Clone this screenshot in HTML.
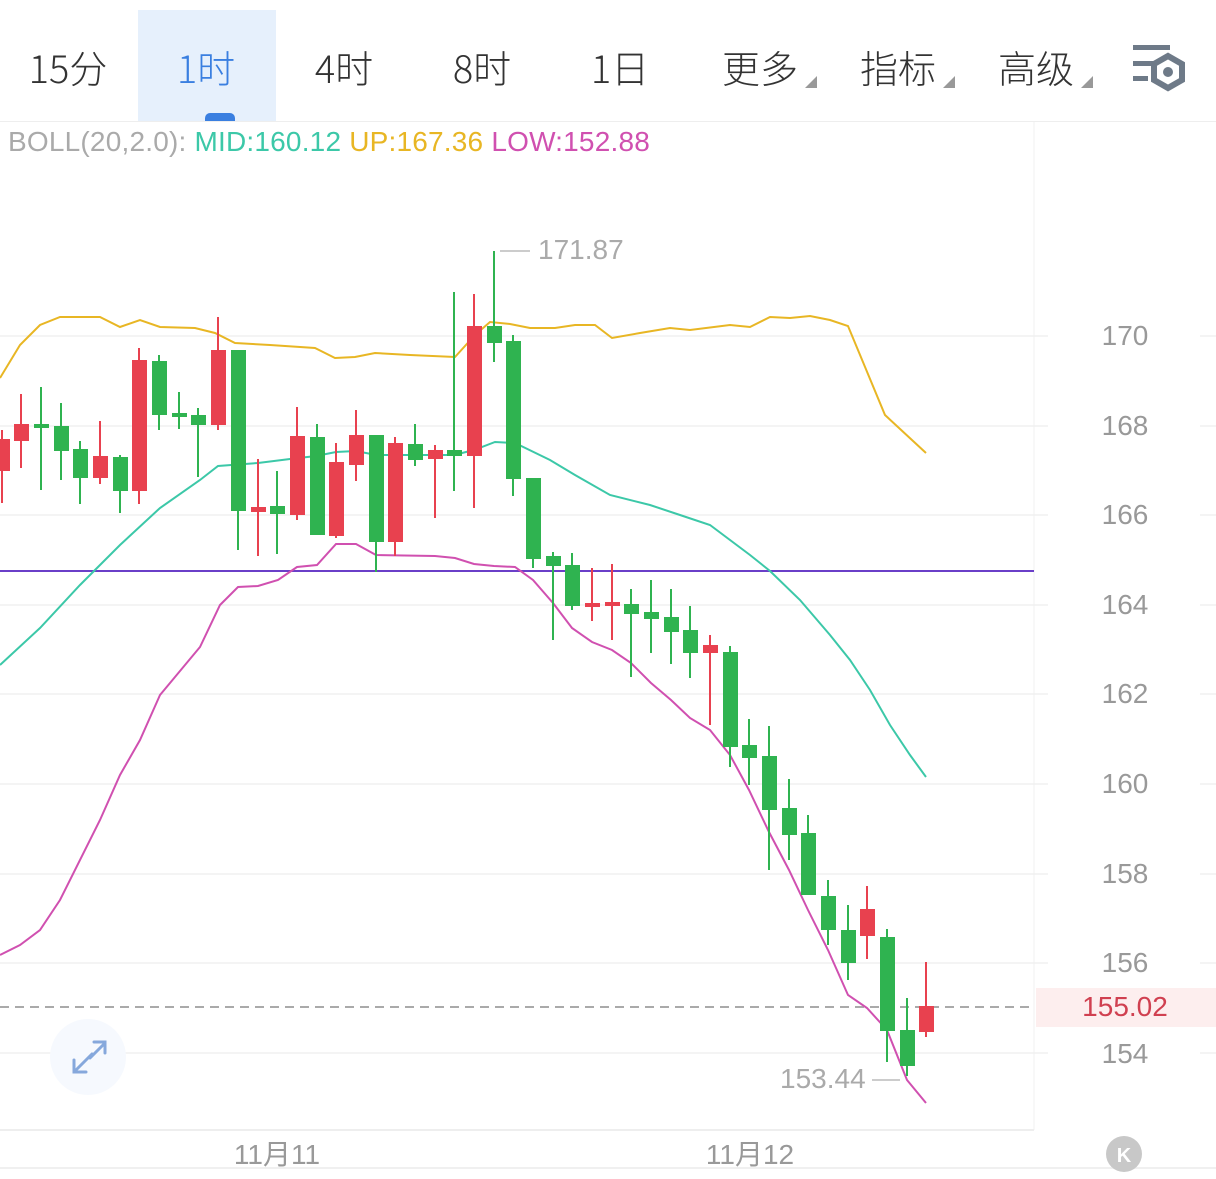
<!DOCTYPE html>
<html><head><meta charset="utf-8"><style>
html,body{margin:0;padding:0;background:#fff;width:1216px;height:1179px;overflow:hidden}
body{font-family:"Liberation Sans","Noto Sans CJK SC",sans-serif;position:relative}
.tab{position:absolute;top:40px;font-size:38px;color:#333;transform:translateX(-50%);white-space:nowrap;font-family:"Noto Sans CJK SC","Liberation Sans",sans-serif;font-weight:300;line-height:54px}
.tri{position:absolute;width:0;height:0;border-left:12px solid transparent;border-bottom:12px solid #999}
</style></head><body>
<div style="position:absolute;left:138px;top:10px;width:138px;height:111px;background:#e6f0fc"></div>
<div style="position:absolute;left:205px;top:113px;width:30px;height:9px;border-radius:5px 5px 0 0;background:#3a7fe0"></div>
<div style="position:absolute;left:0;top:121px;width:1216px;height:1px;background:#eee"></div>
<div class="tab" style="left:68px">15分</div>
<div class="tab" style="left:206px;color:#3a7fe0">1时</div>
<div class="tab" style="left:344px">4时</div>
<div class="tab" style="left:482px">8时</div>
<div class="tab" style="left:620px">1日</div>
<div class="tab" style="left:760px">更多</div>
<div class="tab" style="left:898px">指标</div>
<div class="tab" style="left:1036px">高级</div>
<div class="tri" style="left:805px;top:76px"></div>
<div class="tri" style="left:943px;top:76px"></div>
<div class="tri" style="left:1081px;top:76px"></div>
<svg style="position:absolute;left:0;top:0" width="1216" height="1179">
<g fill="#6e7a88"><rect x="1133" y="45" width="37" height="5"/><rect x="1133" y="61" width="20" height="5"/><rect x="1133" y="76" width="15" height="5"/></g>
<polygon points="1168,56 1182,64 1182,80 1168,88 1154,80 1154,64" fill="none" stroke="#6e7a88" stroke-width="6"/>
<circle cx="1168" cy="72" r="5" fill="#6e7a88"/>
<line x1="1034" y1="122" x2="1034" y2="1130" stroke="#f0f0f0"/>
<g stroke="#f0f0f0" stroke-width="1.5">
<line x1="0" x2="1048" y1="336" y2="336"/><line x1="0" x2="1048" y1="426" y2="426"/><line x1="0" x2="1048" y1="515" y2="515"/><line x1="0" x2="1048" y1="605" y2="605"/><line x1="0" x2="1048" y1="694" y2="694"/><line x1="0" x2="1048" y1="784" y2="784"/><line x1="0" x2="1048" y1="874" y2="874"/><line x1="0" x2="1048" y1="963" y2="963"/><line x1="0" x2="1048" y1="1053" y2="1053"/>
<line x1="1200" x2="1216" y1="336" y2="336"/><line x1="1200" x2="1216" y1="426" y2="426"/><line x1="1200" x2="1216" y1="515" y2="515"/><line x1="1200" x2="1216" y1="605" y2="605"/><line x1="1200" x2="1216" y1="694" y2="694"/><line x1="1200" x2="1216" y1="784" y2="784"/><line x1="1200" x2="1216" y1="874" y2="874"/><line x1="1200" x2="1216" y1="963" y2="963"/><line x1="1200" x2="1216" y1="1053" y2="1053"/>
</g>
<line x1="0" y1="1130" x2="1034" y2="1130" stroke="#eee" stroke-width="2"/>
<line x1="0" y1="1168" x2="1216" y2="1168" stroke="#f0f0f0" stroke-width="2"/>
<circle cx="88" cy="1057" r="38" fill="#f6f9fe"/>
<g stroke="#86a8dc" stroke-width="3" fill="none" stroke-linecap="round"><path d="M76 1070 L92 1054 M74 1060 L74 1072 L86 1072"/><path d="M104 1044 L90 1058 M94 1042 L105 1042 L105 1053"/></g>
<rect x="1036" y="988" width="180" height="39" fill="#fdeeee"/>
<line x1="0" y1="571" x2="1034" y2="571" stroke="#6a3fc8" stroke-width="2"/>
<line x1="0" y1="1007" x2="1034" y2="1007" stroke="#aaa" stroke-width="2" stroke-dasharray="9,6"/>
<polyline fill="none" stroke="#e8b624" stroke-width="2" points="0,378 20,345 40,325 60,317 100,317 120,327 140,320 160,327 195,328 215,333 235,343 270,345 315,348 335,358 355,357 375,353 410,355 455,357 475,335 490,322 510,324 530,328 555,328 575,325 595,325 612,338 640,333 670,328 690,330 730,325 750,327 770,317 790,318 810,316 830,320 848,326 885,415 926,453"/>
<polyline fill="none" stroke="#3cc8a8" stroke-width="2" points="0,665 40,628 80,585 120,545 160,508 200,480 218,466 258,463 290,459 316,456 336,452 356,451 376,455 415,455 454,455 474,450 495,442 515,443 550,460 575,475 610,495 650,505 680,515 710,525 750,555 770,571 800,600 830,635 850,660 870,690 890,725 910,755 926,777"/>
<polyline fill="none" stroke="#d050b0" stroke-width="2" points="0,955 20,945 40,930 60,900 100,820 120,775 140,740 160,695 200,647 220,605 238,587 258,586 278,580 297,567 317,565 336,544 356,544 376,555 435,556 455,558 474,564 494,566 515,567 533,580 553,603 572,628 592,642 612,650 631,663 651,683 671,700 690,718 710,730 730,755 749,790 769,832 789,870 808,910 828,950 848,995 867,1008 887,1030 907,1080 926,1103"/>
<g fill="#e8414f" stroke="#e8414f" stroke-width="2">
<line x1="2" x2="2" y1="430" y2="503"/><rect x="-4" y="440" width="13" height="30"/>
<line x1="21" x2="21" y1="394" y2="468"/><rect x="15" y="425" width="13" height="15"/>
<line x1="100" x2="100" y1="421" y2="484"/><rect x="94" y="457" width="13" height="20"/>
<line x1="139" x2="139" y1="348" y2="504"/><rect x="133" y="361" width="13" height="129"/>
<line x1="218" x2="218" y1="317" y2="430"/><rect x="212" y="351" width="13" height="73"/>
<line x1="258" x2="258" y1="459" y2="556"/><rect x="252" y="508" width="13" height="3"/>
<line x1="297" x2="297" y1="407" y2="520"/><rect x="291" y="437" width="13" height="77"/>
<line x1="336" x2="336" y1="443" y2="538"/><rect x="330" y="463" width="13" height="72"/>
<line x1="356" x2="356" y1="410" y2="481"/><rect x="350" y="436" width="13" height="28"/>
<line x1="395" x2="395" y1="437" y2="556"/><rect x="389" y="444" width="13" height="97"/>
<line x1="435" x2="435" y1="445" y2="518"/><rect x="429" y="451" width="13" height="7"/>
<line x1="474" x2="474" y1="294" y2="508"/><rect x="468" y="327" width="13" height="128"/>
<line x1="592" x2="592" y1="568" y2="621"/><rect x="586" y="604" width="13" height="2"/>
<line x1="612" x2="612" y1="564" y2="640"/><rect x="606" y="603" width="13" height="2"/>
<line x1="710" x2="710" y1="635" y2="725"/><rect x="704" y="646" width="13" height="6"/>
<line x1="867" x2="867" y1="886" y2="959"/><rect x="861" y="910" width="13" height="25"/>
<line x1="926" x2="926" y1="962" y2="1037"/><rect x="920" y="1007" width="13" height="24"/>
</g>
<g fill="#2fb350" stroke="#2fb350" stroke-width="2">
<line x1="41" x2="41" y1="387" y2="490"/><rect x="35" y="425" width="13" height="2"/>
<line x1="61" x2="61" y1="403" y2="480"/><rect x="55" y="427" width="13" height="23"/>
<line x1="80" x2="80" y1="441" y2="504"/><rect x="74" y="450" width="13" height="27"/>
<line x1="120" x2="120" y1="455" y2="513"/><rect x="114" y="458" width="13" height="32"/>
<line x1="159" x2="159" y1="355" y2="430"/><rect x="153" y="362" width="13" height="52"/>
<line x1="179" x2="179" y1="392" y2="429"/><rect x="173" y="414" width="13" height="2"/>
<line x1="198" x2="198" y1="408" y2="477"/><rect x="192" y="416" width="13" height="8"/>
<line x1="238" x2="238" y1="351" y2="550"/><rect x="232" y="351" width="13" height="159"/>
<line x1="277" x2="277" y1="471" y2="554"/><rect x="271" y="507" width="13" height="6"/>
<line x1="317" x2="317" y1="424" y2="534"/><rect x="311" y="438" width="13" height="96"/>
<line x1="376" x2="376" y1="435" y2="572"/><rect x="370" y="436" width="13" height="105"/>
<line x1="415" x2="415" y1="424" y2="466"/><rect x="409" y="445" width="13" height="14"/>
<line x1="454" x2="454" y1="292" y2="491"/><rect x="448" y="451" width="13" height="4"/>
<line x1="494" x2="494" y1="251" y2="362"/><rect x="488" y="327" width="13" height="15"/>
<line x1="513" x2="513" y1="335" y2="496"/><rect x="507" y="342" width="13" height="136"/>
<line x1="533" x2="533" y1="479" y2="568"/><rect x="527" y="479" width="13" height="79"/>
<line x1="553" x2="553" y1="552" y2="640"/><rect x="547" y="557" width="13" height="8"/>
<line x1="572" x2="572" y1="553" y2="610"/><rect x="566" y="566" width="13" height="39"/>
<line x1="631" x2="631" y1="589" y2="677"/><rect x="625" y="605" width="13" height="8"/>
<line x1="651" x2="651" y1="580" y2="653"/><rect x="645" y="613" width="13" height="5"/>
<line x1="671" x2="671" y1="589" y2="664"/><rect x="665" y="618" width="13" height="13"/>
<line x1="690" x2="690" y1="606" y2="678"/><rect x="684" y="631" width="13" height="21"/>
<line x1="730" x2="730" y1="646" y2="767"/><rect x="724" y="653" width="13" height="93"/>
<line x1="749" x2="749" y1="719" y2="785"/><rect x="743" y="746" width="13" height="11"/>
<line x1="769" x2="769" y1="726" y2="870"/><rect x="763" y="757" width="13" height="52"/>
<line x1="789" x2="789" y1="779" y2="860"/><rect x="783" y="809" width="13" height="25"/>
<line x1="808" x2="808" y1="815" y2="880"/><rect x="802" y="834" width="13" height="60"/>
<line x1="828" x2="828" y1="880" y2="945"/><rect x="822" y="897" width="13" height="32"/>
<line x1="848" x2="848" y1="905" y2="980"/><rect x="842" y="931" width="13" height="31"/>
<line x1="887" x2="887" y1="929" y2="1062"/><rect x="881" y="938" width="13" height="92"/>
<line x1="907" x2="907" y1="998" y2="1076"/><rect x="901" y="1031" width="13" height="34"/>
</g>
<line x1="500" y1="251" x2="530" y2="251" stroke="#bbb" stroke-width="1.5"/>
<line x1="872" y1="1080" x2="900" y2="1080" stroke="#bbb" stroke-width="1.5"/>
<circle cx="1124" cy="1154" r="18" fill="#c8c8c8"/>
<text x="1124" y="1162" font-size="20" fill="#fff" text-anchor="middle" font-family="Liberation Sans" font-weight="bold">K</text>
</svg>
<div style="position:absolute;left:8px;top:124px;font-size:28px;line-height:36px;letter-spacing:0.2px;white-space:nowrap"><span style="color:#aaa">BOLL(20,2.0):</span> <span style="color:#3cc8a8">MID:160.12</span> <span style="color:#e8b624">UP:167.36</span> <span style="color:#d050b0">LOW:152.88</span></div>
<div style="position:absolute;left:538px;top:234px;font-size:28px;color:#aaa">171.87</div>
<div style="position:absolute;left:780px;top:1063px;font-size:28px;color:#aaa">153.44</div>
<div style="position:absolute;left:1060px;width:130px;text-align:center;font-size:28px;color:#999;line-height:34px">
<div style="position:absolute;top:319px;width:130px">170</div>
<div style="position:absolute;top:409px;width:130px">168</div>
<div style="position:absolute;top:498px;width:130px">166</div>
<div style="position:absolute;top:588px;width:130px">164</div>
<div style="position:absolute;top:677px;width:130px">162</div>
<div style="position:absolute;top:767px;width:130px">160</div>
<div style="position:absolute;top:857px;width:130px">158</div>
<div style="position:absolute;top:946px;width:130px">156</div>
<div style="position:absolute;top:990px;width:130px;color:#d04050">155.02</div>
<div style="position:absolute;top:1037px;width:130px">154</div>
</div>
<div style="position:absolute;left:277px;top:1133px;transform:translateX(-50%);font-size:28px;color:#999;white-space:nowrap">11月11</div>
<div style="position:absolute;left:750px;top:1133px;transform:translateX(-50%);font-size:28px;color:#999;white-space:nowrap">11月12</div>
</body></html>
